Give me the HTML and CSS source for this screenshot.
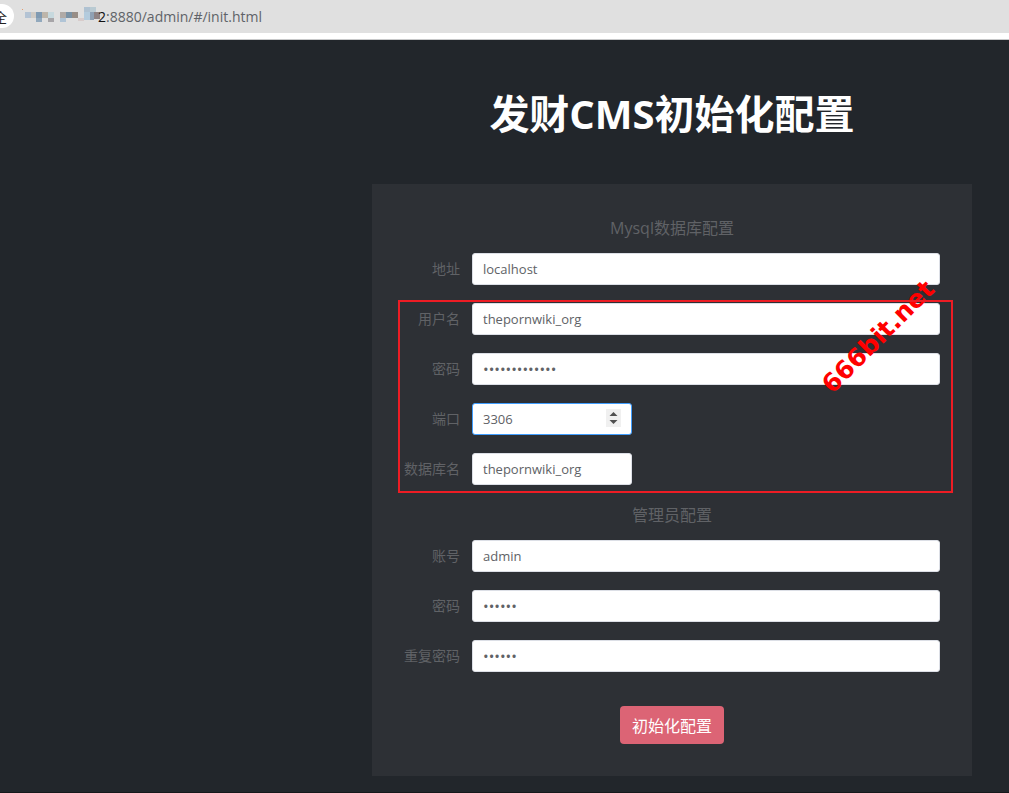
FILE: index.html
```html
<!DOCTYPE html>
<html lang="zh-CN">
<head>
<meta charset="utf-8">
<title>发财CMS初始化配置</title>
<link rel="stylesheet" href="styles.css">
</head>
<body>
<header class="address-bar">
  <span class="security">全</span>
  <svg class="mosaic" width="78" height="18" viewBox="0 0 78 18" shape-rendering="crispEdges" aria-hidden="true">
    <rect x="0" y="2" width="1" height="1" fill="#e59a6a"/>
    <rect x="3" y="5" width="6" height="6" fill="#b3c3d4"/><rect x="9" y="5" width="5" height="6" fill="#cfcac4"/>
    <rect x="14" y="5" width="6" height="6" fill="#809ab2"/><rect x="20" y="5" width="6" height="6" fill="#bdb5aa"/>
    <rect x="26" y="5" width="6" height="6" fill="#c7d9de"/><rect x="14" y="11" width="6" height="4" fill="#92a9bd"/>
    <rect x="26" y="11" width="6" height="4" fill="#a7a5a8"/>
    <rect x="38" y="5" width="6" height="6" fill="#b0aaa6"/><rect x="44" y="5" width="6" height="6" fill="#7a92a5"/>
    <rect x="50" y="5" width="6" height="6" fill="#978d86"/><rect x="38" y="11" width="6" height="4" fill="#b0c4d6"/>
    <rect x="56" y="11" width="6" height="3" fill="#d8cccb"/>
    <rect x="62" y="0" width="6" height="5" fill="#afc2d2"/><rect x="62" y="5" width="6" height="8" fill="#b3cbdd"/>
    <rect x="68" y="0" width="6" height="5" fill="#b9cad2"/>
    <rect x="68" y="5" width="4" height="8" fill="#8fa1b4"/><rect x="72" y="5" width="6" height="7" fill="#8e8384"/>
  </svg>
  <span class="url"><b class="host">2</b>:8880/admin/#/init.html</span>
</header>
<main class="page">
  <div class="content">
    <h1 class="title">发财CMS初始化配置</h1>
    <form class="card">
      <h2 class="section">Mysql数据库配置</h2>
      <div class="row"><label for="host">地址</label><input class="field" id="host" type="text" value="localhost"></div>
      <div class="marked">
        <div class="row"><label for="user">用户名</label><input class="field" id="user" type="text" value="thepornwiki_org"></div>
        <div class="row"><label for="dbpass">密码</label><input class="field secret" id="dbpass" type="password" value="abcdefghijklm"></div>
        <div class="row"><label for="port">端口</label>
          <div class="number">
            <input class="field active" id="port" type="number" value="3306">
            <svg class="spinner" width="15" height="18" viewBox="0 0 15 18" aria-hidden="true">
              <rect width="15" height="18" fill="#f0f0f0"/>
              <path d="M3.5 7 7.5 3l4 4zM3.5 11h8l-4 4z" fill="#505050"/>
            </svg>
          </div>
        </div>
        <div class="row"><label for="dbname">数据库名</label><input class="field short" id="dbname" type="text" value="thepornwiki_org"></div>
        <span class="watermark">666bit.net</span>
      </div>
      <h2 class="section">管理员配置</h2>
      <div class="row"><label for="account">账号</label><input class="field" id="account" type="text" value="admin"></div>
      <div class="row"><label for="pass">密码</label><input class="field secret" id="pass" type="password" value="abcdef"></div>
      <div class="row"><label for="repeat">重复密码</label><input class="field secret" id="repeat" type="password" value="abcdef"></div>
      <div class="actions"><button class="submit" type="button">初始化配置</button></div>
    </form>
  </div>
</main>
</body>
</html>
```
FILE: styles.css
```css
* { box-sizing: border-box; }
body {
  margin: 0;
  min-height: 100vh;
  display: flex;
  flex-direction: column;
  background: #22262b;
  font-family: "Open Sans", "Noto Sans CJK SC", sans-serif;
}
.address-bar {
  display: flex;
  align-items: center;
  height: 40px;
  padding-bottom: 8px;
  background: linear-gradient(#e0e0e0 33px, #fff 33px 39px, #c8c9ca 39px);
}
.security {
  display: flex;
  align-items: center;
  justify-content: flex-end;
  width: 14px;
  height: 24px;
  padding-right: 7px;
  border-radius: 0 12px 12px 0;
  background: #fff;
  color: #222;
  font-size: 13px;
}
.mosaic { margin-left: 8px; }
.url { margin-left: -2px; color: #5f6368; font-size: 14px; }
.host { color: #111; font-weight: 400; }
.page {
  flex: 1;
  padding: 44px 37px 16px;
  border-bottom: 1px solid #15181b;
}
.content { max-width: 600px; margin-left: auto; }
.title {
  margin: 0 0 40px;
  color: #fff;
  font-size: 40px;
  line-height: 60px;
  font-weight: 700;
  text-align: center;
}
.card { padding: 32px; background: #2d3035; }
.section {
  margin: 0 0 13px;
  color: #606266;
  font-size: 16px;
  line-height: 24px;
  font-weight: 400;
  text-align: center;
}
.row {
  display: flex;
  align-items: center;
  gap: 12px;
  margin-bottom: 18px;
}
.row label {
  width: 56px;
  color: #606266;
  font-size: 14px;
  line-height: 32px;
  white-space: nowrap;
  text-align: right;
}
.field {
  flex: 1;
  min-width: 0;
  height: 32px;
  padding: 0 10px;
  border: 1px solid #dcdfe6;
  border-radius: 3px;
  background: #fff;
  color: #606266;
  font-family: inherit;
  font-size: 13px;
}
.secret { font-size: 15px; }
.short { flex: 0 0 160px; }
.number { position: relative; display: flex; width: 160px; }
.active { border-color: #409eff; }
.field::-webkit-inner-spin-button { display: none; }
.spinner { position: absolute; top: 6px; right: 11px; }
.marked { position: relative; }
.marked::after {
  content: "";
  position: absolute;
  inset: -3px -13px -8px -6px;
  border: 2px solid #ed1c24;
  pointer-events: none;
}
.watermark {
  position: absolute;
  right: -12px;
  top: 18px;
  color: #f00;
  font: 700 25px/32px "DejaVu Sans", sans-serif;
  transform: rotate(-45deg);
}
.actions { display: flex; justify-content: center; padding-top: 16px; }
.submit {
  height: 38px;
  padding: 0 12px;
  border: 0;
  border-radius: 4px;
  background: #dc6475;
  color: #fff;
  font-family: inherit;
  font-size: 16px;
}
```
